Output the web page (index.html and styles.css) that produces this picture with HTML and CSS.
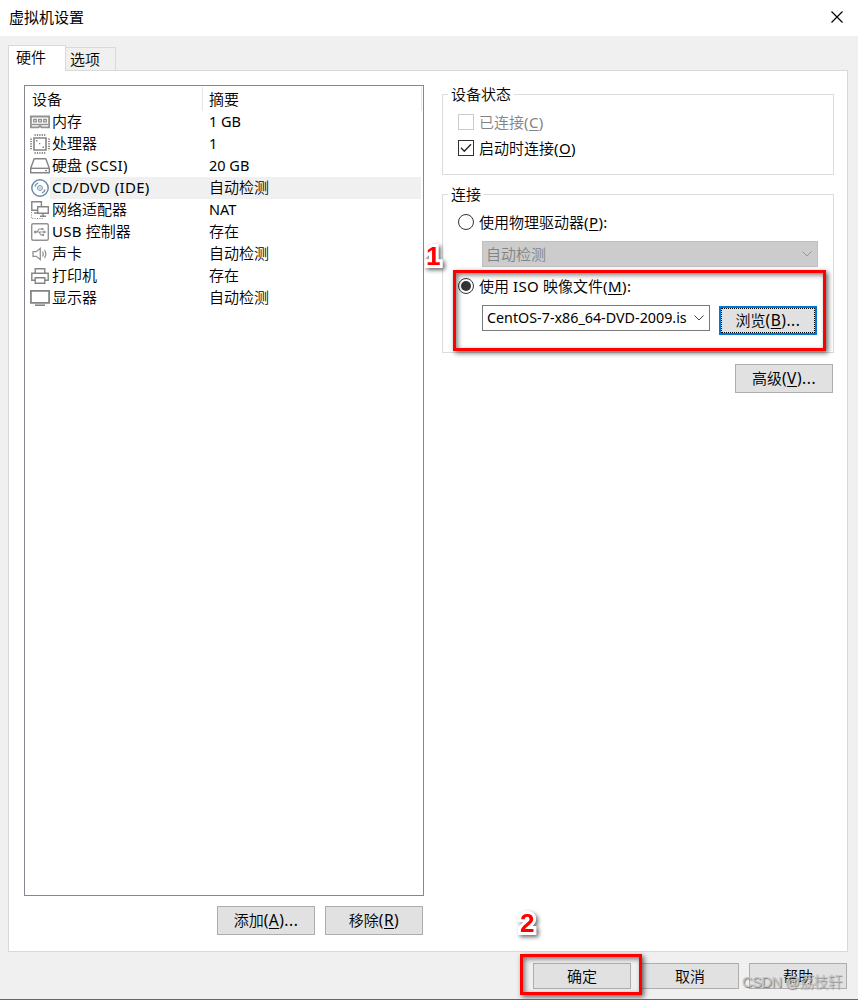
FILE: index.html
```html
<!DOCTYPE html>
<html lang="zh-CN">
<head>
  <meta charset="UTF-8">
  <title>虚拟机设置</title>
  <link rel="stylesheet" href="styles.css">
</head>
<body>

<div class="dialog">
  <div class="titlebar">
    <span class="title">虚拟机设置</span>
    <svg class="close" width="12" height="12" viewBox="0 0 12 12"><path d="M.5 .5l11 11M11.5 .5l-11 11" stroke="#000" stroke-width="1.2"/></svg>
  </div>

  <div class="tabs">
    <div class="tab active">硬件</div>
    <div class="tab">选项</div>
  </div>

  <div class="panel">
    <div class="left">
      <div class="device-list">
        <div class="row head">
          <span class="name">设备</span>
          <span class="summary">摘要</span>
        </div>
        <div class="row">
          <svg class="icon" viewBox="0 0 20 20" fill="none" stroke="#929292"><path stroke-width="1.8" d="M.9 4.500h18.200v10.800H11.500l-1.500-1.500-1.500 1.500H.9z"/><path stroke-width="1.300" d="M3.600 7.500h2.800v2.300H3.600zM8.600 7.500h2.800v2.300H8.600zM13.600 7.500h2.800v2.300h-2.800zM2 12.500h16"/></svg>
          <span class="name">内存</span><span class="summary"><i>1 GB</i></span>
        </div>
        <div class="row">
          <svg class="icon" viewBox="0 0 20 20" fill="none" stroke="#858585"><path stroke-width="1.6" d="M4 4h12v12H4z"/><path stroke-width="2" stroke-dasharray="1.2 1.2" d="M4.500 1h11M4.500 19h11M1 4.500v11M19 4.500v11"/><path stroke="none" fill="#858585" d="M6 6h1.500v1.500H6zM9 9h1.300v1.300H9zM12.500 12.500H14V14h-1.500z"/></svg>
          <span class="name">处理器</span><span class="summary"><i>1</i></span>
        </div>
        <div class="row">
          <svg class="icon" viewBox="0 0 20 20" fill="none" stroke="#858585" stroke-width="1.4"><path d="M4.200 2.700h11.600l3.500 9.500v4.500H.7v-4.500z"/><path d="M.7 12.300h18.600"/><path d="M15 14.600h2"/></svg>
          <span class="name">硬盘 <i>(SCSI)</i></span><span class="summary"><i>20 GB</i></span>
        </div>
        <div class="row selected">
          <svg class="icon" viewBox="0 0 20 20" fill="none" stroke="#6688a5"><circle cx="10" cy="10" r="8.200" stroke-width="1.4"/><circle cx="10" cy="10" r="2.400" stroke-width="1"/><circle cx="10" cy="10" r=".7" fill="#6688a5" stroke="none"/><path d="M4.900 8.500a5.400 5.400 0 0 1 3.200-3.500M15.100 11.500a5.400 5.400 0 0 1-3.200 3.500" stroke-width="1.2"/></svg>
          <span class="name"><i>CD/DVD (IDE)</i></span><span class="summary">自动检测</span>
        </div>
        <div class="row">
          <svg class="icon" viewBox="0 0 20 20" fill="none" stroke="#858585" stroke-width="1.4"><path d="M7 10.300H1.800V1.800h9.600V6M4 13h4.500"/><path d="M7.700 6.700h10.600v6.600H7.700zM13 13.300v3M10 16.300h6"/><path stroke-width="1" stroke-dasharray="1 1.4" d="M1.500 12v6.500H13"/></svg>
          <span class="name">网络适配器</span><span class="summary"><i>NAT</i></span>
        </div>
        <div class="row">
          <svg class="icon" viewBox="0 0 20 20" fill="none" stroke="#929292"><rect x="1.700" y="1.700" width="16.600" height="16.600" rx="1.500" stroke-width="1.400"/><path stroke-width="1.100" d="M5 10h9M7 10l2-3h3M9 10l2 3h2"/><circle cx="5.300" cy="10" r="1" fill="#929292"/><path fill="#929292" stroke="none" d="M13.500 8.300l3 1.700-3 1.700zM11.500 6h2v2h-2zM12 12h2v2h-2z"/></svg>
          <span class="name"><i>USB</i> 控制器</span><span class="summary">存在</span>
        </div>
        <div class="row">
          <svg class="icon" viewBox="0 0 20 20" fill="none" stroke="#929292" stroke-width="1.3"><path d="M3 7.700h3.300L10.300 4.300v11.400l-4-3.400H3z"/><path d="M12.500 7.500q1.500 2.500 0 5M14.500 6q2.600 4 0 8"/></svg>
          <span class="name">声卡</span><span class="summary">自动检测</span>
        </div>
        <div class="row">
          <svg class="icon" viewBox="0 0 20 20" fill="none" stroke="#858585" stroke-width="1.4"><path d="M5.200 7V2.700h9.600V7M5 14.200H1.800V7.200h16.400v7H15"/><path d="M5.200 11.700h9.600v5.600H5.200z"/></svg>
          <span class="name">打印机</span><span class="summary">存在</span>
        </div>
        <div class="row">
          <svg class="icon" viewBox="0 0 20 20" fill="none" stroke="#858585"><path stroke-width="1.8" d="M.9 2.900h18.200v12H.9z"/><path stroke-width="1.600" d="M5 17.200h10"/></svg>
          <span class="name">显示器</span><span class="summary">自动检测</span>
        </div>
      </div>
      <div class="list-buttons">
        <button class="btn">添加<i>(<u>A</u>)...</i></button>
        <button class="btn">移除<i>(<u>R</u>)</i></button>
      </div>
    </div>

    <div class="right">
      <div class="group status">
        <div class="legend">设备状态</div>
        <div class="option disabled"><span class="box"></span><span class="label">已连接<i>(<u>C</u>)</i></span></div>
        <div class="option">
          <span class="box"><svg width="14" height="14" viewBox="0 0 14 14"><path d="M2 6.800l3.300 3.400L12 3.300" fill="none" stroke="#222" stroke-width="1.300"/></svg></span><span class="label">启动时连接<i>(<u>O</u>)</i></span>
        </div>
      </div>

      <div class="group connection">
        <div class="legend">连接</div>
        <div class="option physical"><span class="radio"></span><span class="label">使用物理驱动器<i>(<u>P</u>):</i></span></div>
        <div class="combo disabled-combo">
          <span class="value">自动检测</span>
          <svg width="10" height="6" viewBox="0 0 10 6"><path d="M.5 .5L5 5 9.500 .5" fill="none" stroke="#999"/></svg>
        </div>
        <div class="option iso"><span class="radio checked"></span><span class="label">使用 <i>ISO</i> 映像文件<i>(<u>M</u>):</i></span></div>
        <div class="file-row">
          <div class="combo file">
            <span class="value path">CentOS-7-x86_64-DVD-2009.is</span>
            <svg width="10" height="6" viewBox="0 0 10 6"><path d="M.5 .5L5 5 9.500 .5" fill="none" stroke="#444"/></svg>
          </div>
          <button class="btn browse">浏览<i>(<u>B</u>)...</i></button>
        </div>
      </div>

      <button class="btn advanced">高级<i>(<u>V</u>)...</i></button>
    </div>
  </div>

  <div class="footer">
    <button class="btn">确定</button>
    <button class="btn">取消</button>
    <button class="btn">帮助</button>
  </div>

  <div class="mark mark-iso"></div>
  <div class="mark mark-ok"></div>
  <div class="step step-1">1</div>
  <div class="step step-2">2</div>
  <div class="watermark">CSDN @荔枝轩</div>
</div>

</body>
</html>
```
FILE: styles.css
```css
* {
  box-sizing: border-box;
}

body {
  margin: 0;
  font-family: "Noto Sans", "Noto Sans CJK SC", sans-serif;
  font-size: 15px;
  font-weight: 350;
  color: #000;
}

i {
  font-style: normal;
  font-size: 15px;
  font-weight: 400;
  letter-spacing: .15px;
}

u {
  text-underline-offset: 2px;
  text-decoration-thickness: 1px;
}

.dialog {
  position: relative;
  width: 858px;
  height: 1000px;
  overflow: hidden;
  background: #f0f0f0;
  border-bottom: 1px solid #666;
}

.titlebar {
  display: flex;
  align-items: center;
  justify-content: space-between;
  height: 36px;
  padding: 0 15px 2px 9px;
  background: #fff;
}

.title {
  padding-bottom: 2px;
  font-weight: 400;
}

.tabs {
  display: flex;
  align-items: flex-end;
  height: 34px;
  padding-left: 8px;
}

.tab {
  width: 50px;
  height: 23px;
  padding-left: 4px;
  line-height: 22px;
  border: 1px solid #d9d9d9;
  border-width: 1px 1px 0 0;
}

.tab.active {
  position: relative;
  z-index: 1;
  width: 58px;
  height: 26px;
  margin-bottom: -1px;
  padding-left: 7px;
  background: #fff;
  border-left-width: 1px;
}

.panel {
  display: flex;
  gap: 18px;
  width: 840px;
  height: 882px;
  margin-left: 8px;
  padding: 14px 13px 0 15px;
  background: #fff;
  border: 1px solid #d9d9d9;
}

.left {
  width: 400px;
}

.device-list {
  height: 811px;
  padding: 1px;
  border: 1px solid #828790;
}

.row {
  display: flex;
  align-items: center;
  height: 22px;
  padding-left: 4px;
  line-height: 22px;
  white-space: pre;
}

.row.head {
  height: 24px;
  padding-left: 4px;
  border-right: 1px solid #e5e5e5;
}

.row.head .name {
  width: 172px;
}

.row.head .summary {
  height: 24px;
  line-height: 24px;
  border-left: 1px solid #e5e5e5;
}

.row.selected {
  margin-right: 1px;
  background: linear-gradient(to right, #fff 24px, #f0f0f0 24px);
}

.icon {
  width: 20px;
  height: 20px;
}

.name,
.summary {
  height: 22px;
}

.name {
  width: 152px;
  padding-left: 2px;
}

.name i {
  letter-spacing: .3px;
}

.row:not(.head) .name,
.row:not(.head) .summary {
  line-height: 21px;
}

.summary {
  padding-left: 6px;
}

.row:not(.head) .summary {
  padding-left: 7px;
}

.row .summary i {
  font-size: 14.5px;
  letter-spacing: 0;
}

.list-buttons {
  display: flex;
  gap: 10px;
  justify-content: flex-end;
  margin: 10px 1px 0 0;
}

.btn {
  width: 98px;
  height: 29px;
  padding: 0 0 2px;
  font: inherit;
  color: #000;
  background: #e1e1e1;
  border: 1px solid #adadad;
}

.btn i {
  font-size: 15.5px;
  letter-spacing: .5px;
}

.right {
  display: flex;
  flex-direction: column;
  width: 392px;
}

.group {
  padding-left: 15px;
  border: 1px solid #dcdcdc;
}

.legend {
  width: max-content;
  height: 20px;
  margin: -11px 0 0 -10px;
  padding: 0 3px;
  line-height: 20px;
  background: #fff;
}

.status {
  height: 81px;
  margin-top: 9px;
}

.connection {
  height: 159px;
  margin-top: 19px;
}

.option {
  display: flex;
  align-items: center;
  height: 26px;
}

.label {
  padding-bottom: 2px;
  white-space: pre;
}

.label i {
  letter-spacing: .4px;
}

.status .legend {
  margin-bottom: 5px;
}

.option.disabled {
  color: #838383;
}

.box,
.radio {
  width: 16px;
  height: 16px;
  margin-right: 5px;
  border: 1px solid #333;
}

.box svg {
  display: block;
}

.disabled .box {
  border-color: #ccc;
}

.radio {
  border-radius: 50%;
}

.radio.checked {
  padding: 2px;
  background: #333;
  background-clip: content-box;
}

.physical {
  margin-top: 5px;
}

.combo {
  display: flex;
  align-items: center;
  justify-content: space-between;
  height: 26px;
  padding: 0 5px 0 4px;
  border: 1px solid #7a7a7a;
}

.value {
  padding-bottom: 2px;
}

.disabled-combo {
  width: 336px;
  margin: 6px 0 0 24px;
  color: #838383;
  background: #ccc;
  border-color: #bfbfbf;
}

.disabled-combo .value {
  margin-left: -1px;
}

.iso {
  margin-top: 6px;
}

.file-row {
  display: flex;
  gap: 9px;
  margin: 6px 0 0 24px;
}

.file {
  width: 228px;
}

.path {
  font-size: 14.3px;
  font-weight: 400;
  white-space: nowrap;
}

.browse {
  margin-top: 1px;
  border: 2px solid #0078d7;
  outline: 1px dotted #000;
  outline-offset: -3px;
}

.advanced {
  align-self: flex-end;
  margin: 11px 1px 0 0;
}

.footer {
  display: flex;
  gap: 10px;
  justify-content: flex-end;
  padding: 11px 11px 0 0;
}

.footer .btn {
  height: 26px;
}

/* annotations drawn over the dialog */
.mark {
  position: absolute;
  border: 3px solid #f00;
  box-shadow: 2px 2px 5px rgba(0, 0, 0, .6), inset 2px 2px 5px rgba(0, 0, 0, .5);
}

.mark-iso {
  left: 453px;
  top: 270px;
  width: 373px;
  height: 81px;
}

.mark-ok {
  left: 520px;
  top: 954px;
  width: 122px;
  height: 41px;
}

.step {
  position: absolute;
  font: bold 26px/30px "Liberation Sans", Arial, sans-serif;
  color: #f00;
  -webkit-text-stroke: 6px #fff;
  paint-order: stroke fill;
  stroke-linejoin: round;
  filter: drop-shadow(2px 2px 2px rgba(0, 0, 0, .6));
}

.step-1 {
  left: 426px;
  top: 241px;
}

.step-2 {
  left: 520px;
  top: 908px;
}

.watermark {
  position: absolute;
  left: 742px;
  top: 972px;
  font: 300 14.5px/20px "Liberation Sans", "Noto Sans CJK SC", sans-serif;
  letter-spacing: -.4px;
  color: #c4c4c4;
  text-shadow: 1px 1px 1px #777;
  white-space: nowrap;
}
```
